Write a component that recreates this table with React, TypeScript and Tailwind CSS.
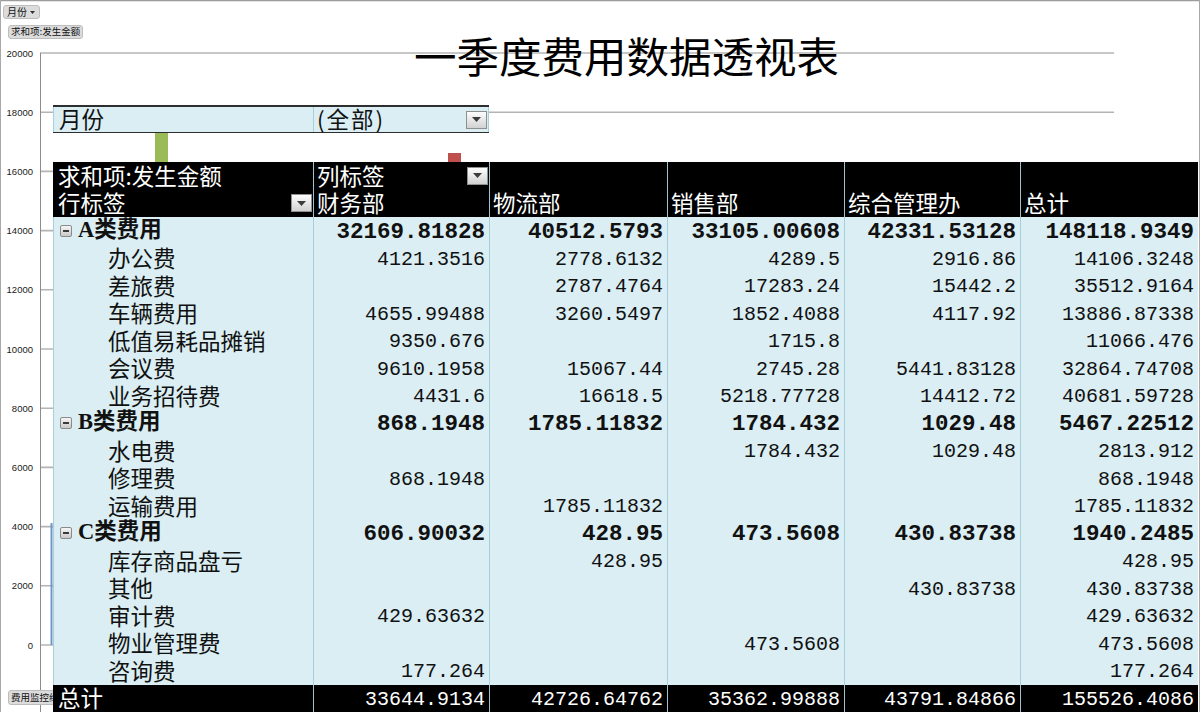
import React from "react";

type Kind = "cat" | "item";
const rows: { label: string; kind: Kind; vals: string[] }[] = [
  { label: "A类费用", kind: "cat", vals: ["32169.81828", "40512.5793", "33105.00608", "42331.53128", "148118.9349"] },
  { label: "办公费", kind: "item", vals: ["4121.3516", "2778.6132", "4289.5", "2916.86", "14106.3248"] },
  { label: "差旅费", kind: "item", vals: ["", "2787.4764", "17283.24", "15442.2", "35512.9164"] },
  { label: "车辆费用", kind: "item", vals: ["4655.99488", "3260.5497", "1852.4088", "4117.92", "13886.87338"] },
  { label: "低值易耗品摊销", kind: "item", vals: ["9350.676", "", "1715.8", "", "11066.476"] },
  { label: "会议费", kind: "item", vals: ["9610.1958", "15067.44", "2745.28", "5441.83128", "32864.74708"] },
  { label: "业务招待费", kind: "item", vals: ["4431.6", "16618.5", "5218.77728", "14412.72", "40681.59728"] },
  { label: "B类费用", kind: "cat", vals: ["868.1948", "1785.11832", "1784.432", "1029.48", "5467.22512"] },
  { label: "水电费", kind: "item", vals: ["", "", "1784.432", "1029.48", "2813.912"] },
  { label: "修理费", kind: "item", vals: ["868.1948", "", "", "", "868.1948"] },
  { label: "运输费用", kind: "item", vals: ["", "1785.11832", "", "", "1785.11832"] },
  { label: "C类费用", kind: "cat", vals: ["606.90032", "428.95", "473.5608", "430.83738", "1940.2485"] },
  { label: "库存商品盘亏", kind: "item", vals: ["", "428.95", "", "", "428.95"] },
  { label: "其他", kind: "item", vals: ["", "", "", "430.83738", "430.83738"] },
  { label: "审计费", kind: "item", vals: ["429.63632", "", "", "", "429.63632"] },
  { label: "物业管理费", kind: "item", vals: ["", "", "473.5608", "", "473.5608"] },
  { label: "咨询费", kind: "item", vals: ["177.264", "", "", "", "177.264"] },
];
const totals = ["33644.9134", "42726.64762", "35362.99888", "43791.84866", "155526.4086"];
const depts = ["财务部", "物流部", "销售部", "综合管理办", "总计"];

function Drop() {
  return (
    <span className="flex h-[18px] w-[21px] shrink-0 items-center justify-center border border-[#8f8f8f] bg-linear-to-b from-[#fdfdfd] to-[#d2d2d2]">
      <svg width="9" height="5" viewBox="0 0 9 5">
        <path d="M0 0h9L4.5 5z" fill="#3c3c3c" />
      </svg>
    </span>
  );
}

function Minus() {
  return (
    <span className="flex h-[12px] w-[12px] shrink-0 items-center justify-center rounded-[2px] border border-[#8a8a8a] bg-linear-to-b from-[#f6f6f6] to-[#c9c9c9]">
      <span className="h-[2px] w-[6px] bg-[#3a3a3a]" />
    </span>
  );
}

const axis = ["20000", "18000", "16000", "14000", "12000", "10000", "8000", "6000", "4000", "2000", "0"];

export default function App() {
  return (
    <div className="relative h-[712px] w-[1200px] overflow-hidden bg-white font-['Noto_Sans_CJK_SC',sans-serif] text-[#111]">
      {/* chart canvas */}
      <svg className="absolute left-0 top-0" width="1200" height="712" viewBox="0 0 1200 712">
        <line x1="0" y1="0.5" x2="1200" y2="0.5" stroke="#9c9c9c" strokeWidth="1.5" />
        <line x1="0.5" y1="0" x2="0.5" y2="712" stroke="#a8a8a8" strokeWidth="1" />
        <line x1="1199.5" y1="0" x2="1199.5" y2="712" stroke="#a8a8a8" strokeWidth="1" />
        {axis.map((a, i) => {
          const y = 53 + i * 59.2;
          return (
            <g key={a}>
              <line x1="40" y1={y} x2="1114" y2={y} stroke="#b4b4b4" strokeWidth="1.6" />
              <text x="33" y={y + 3.5} textAnchor="end" fontFamily="Liberation Sans, Arial, sans-serif" fontSize="9.5" fill="#1a1a1a">
                {a}
              </text>
            </g>
          );
        })}
        <line x1="40.5" y1="53" x2="40.5" y2="712" stroke="#8c8c8c" strokeWidth="1" />
        <rect x="155" y="118" width="13" height="50" fill="#9bbb59" />
        <rect x="448" y="153" width="13" height="14" fill="#c0504d" />
        <line x1="51.5" y1="523" x2="51.5" y2="645" stroke="#6e97cb" strokeWidth="2" />
      </svg>

      {/* chart field buttons */}
      <div className="absolute left-[3px] top-[5px] flex h-[14px] w-[37px] items-center justify-between rounded-[3px] border border-[#bdbdbd] bg-[#dcdcdc] pl-[3px] pr-[4px] text-[10px] leading-none">
        <span>月份</span>
        <svg width="5" height="3" viewBox="0 0 5 3">
          <path d="M0 0h5L2.5 3z" fill="#333" />
        </svg>
      </div>
      <div className="absolute left-[8px] top-[25px] flex h-[14px] items-center rounded-[3px] border border-[#bdbdbd] bg-[#dcdcdc] px-[2px] text-[9.5px] leading-none">
        求和项:发生金额
      </div>
      <div className="absolute left-[8px] top-[690px] flex h-[15px] w-[60px] items-center rounded-[3px] border border-[#bdbdbd] bg-[#dcdcdc] px-[2px] text-[9.5px] leading-none">
        费用监控约
      </div>

      {/* chart title */}
      <div className="absolute left-[414px] top-[34px] whitespace-nowrap text-[42.5px] leading-none text-black">
        一季度费用数据透视表
      </div>

      {/* pivot table */}
      <div className="relative z-10 pl-[53px] pt-[105px]">
        <div className="flex h-[28px] w-[436px] border-b border-t-2 border-[#2e2e2e] bg-[#daeef3] text-[22.5px] leading-none">
          <div className="flex w-[260px] items-center border-l border-[#a8d0dc] pb-[2px] pl-[5px]">月份</div>
          <div className="flex flex-1 items-center justify-between border-l border-r border-[#a8d0dc] pl-[3px] pr-[1px]">
            <span className="pb-[2px] tracking-[2px]">(全部)</span>
            <Drop />
          </div>
        </div>

        <div className="mt-[29px] grid w-[1145px] auto-rows-[27.5px] grid-cols-[260px_176px_178px_177px_176px_178px] text-[22.5px] leading-none">
          {/* header row 1 */}
          <div className="flex items-center bg-black pb-[2px] pl-[5px] text-white">求和项:发生金额</div>
          <div className="flex items-center justify-between border-l border-[#9fc4d0] bg-black pl-[3px] pr-[1px] text-white">
            <span className="pb-[2px]">列标签</span>
            <Drop />
          </div>
          <div className="border-l border-[#9fc4d0] bg-black" />
          <div className="border-l border-[#9fc4d0] bg-black" />
          <div className="border-l border-[#9fc4d0] bg-black" />
          <div className="border-l border-[#9fc4d0] bg-black" />
          {/* header row 2 */}
          <div className="flex items-center justify-between bg-black pl-[5px] pr-[1px] text-white">
            <span className="pb-[2px]">行标签</span>
            <Drop />
          </div>
          {depts.map((d) => (
            <div key={d} className="flex items-center border-l border-[#9fc4d0] bg-black pb-[2px] pl-[3px] text-white">
              {d}
            </div>
          ))}

          {/* data rows */}
          {rows.map((r) => (
            <React.Fragment key={r.label}>
              {r.kind === "cat" ? (
                <div className="flex items-center gap-[6px] border-l border-[#a8d0dc] bg-[#daeef3] pl-[6px] font-bold">
                  <Minus />
                  <span className="pb-[2px] font-['Liberation_Serif','Noto_Sans_CJK_SC',serif]">{r.label}</span>
                </div>
              ) : (
                <div className="flex items-center border-l border-[#a8d0dc] bg-[#daeef3] pb-[2px] pl-[54px]">{r.label}</div>
              )}
              {r.vals.map((v, i) => (
                <div
                  key={i}
                  className={
                    r.kind === "cat"
                      ? "flex items-center justify-end border-l border-[#a8d0dc] bg-[#daeef3] pr-[4px] pt-[2px] font-['Liberation_Mono',monospace] text-[22.5px] font-bold"
                      : "flex items-center justify-end border-l border-[#a8d0dc] bg-[#daeef3] pr-[4px] pt-[3px] font-['Liberation_Mono',monospace] text-[20px]"
                  }
                >
                  {v}
                </div>
              ))}
            </React.Fragment>
          ))}

          {/* total row */}
          <div className="flex items-center bg-black pb-[2px] pl-[5px] text-white">总计</div>
          {totals.map((t) => (
            <div
              key={t}
              className="flex items-center justify-end border-l border-[#9fc4d0] bg-black pr-[4px] pt-[3px] font-['Liberation_Mono',monospace] text-[20px] text-white"
            >
              {t}
            </div>
          ))}
        </div>
      </div>
    </div>
  );
}
